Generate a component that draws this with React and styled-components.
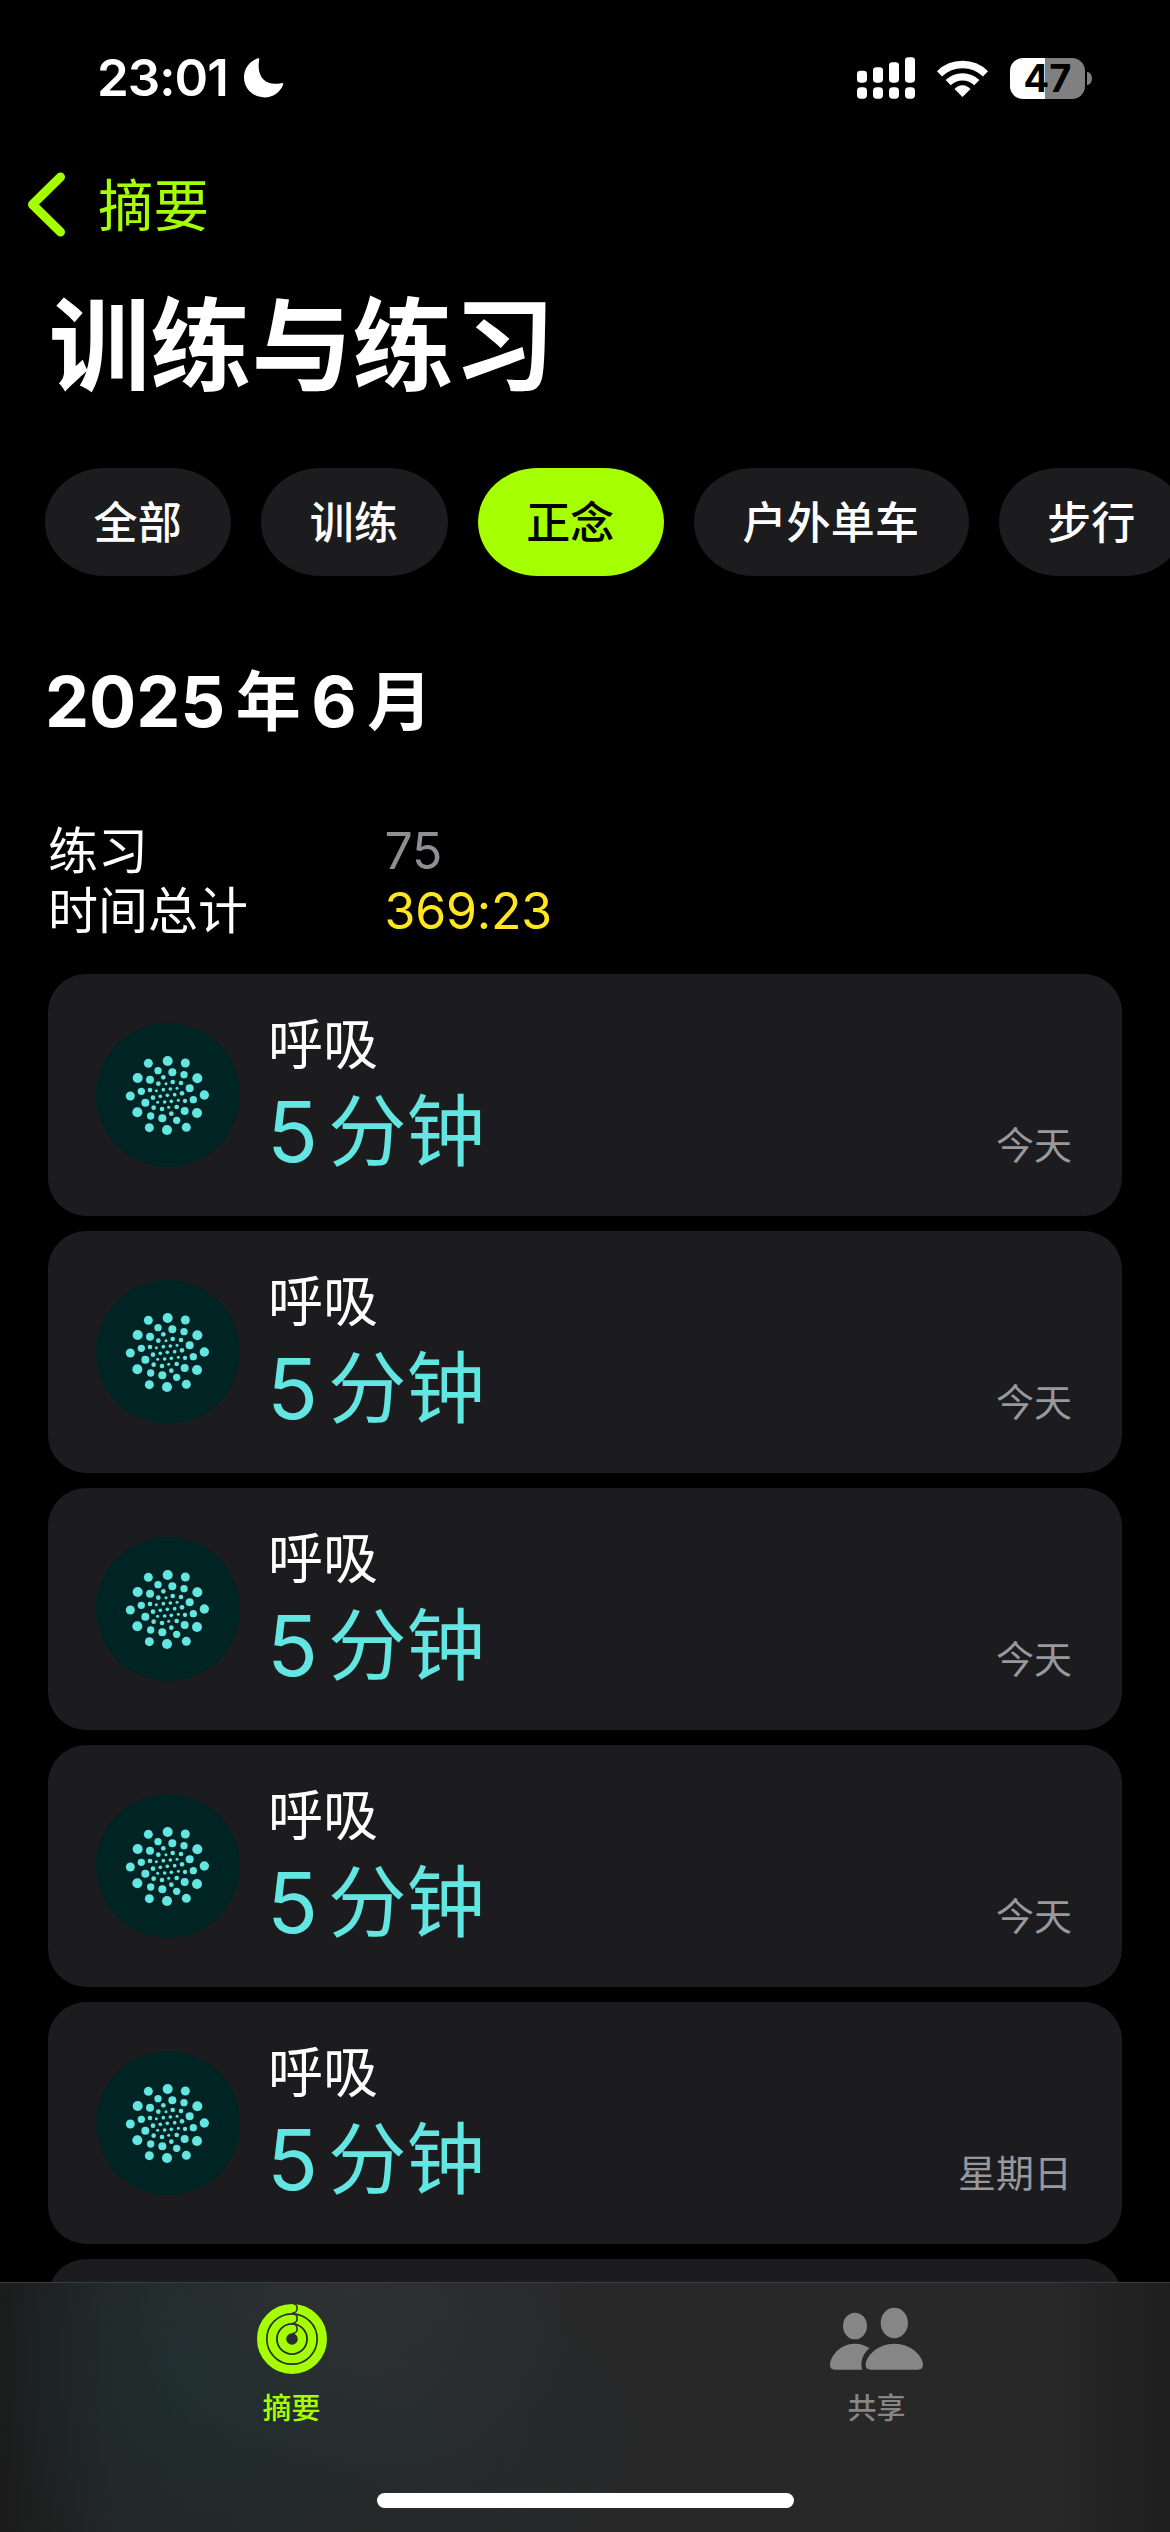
import React from "react";
import styled, { createGlobalStyle } from "styled-components";

const Global = createGlobalStyle`
  * { box-sizing: border-box; }
  html, body { margin: 0; background: #000; }
  body { overflow: hidden; }
`;

const Screen = styled.div`
  width: 1170px;
  height: 2532px;
  overflow: hidden;
  background: #000;
  color: #fff;
  font-family: Inter, "Noto Sans CJK SC", sans-serif;
  display: flex;
  flex-direction: column;
`;

const StatusBar = styled.header`
  height: 156px;
  flex: none;
  padding: 0 78px 0 97px;
  display: flex;
  align-items: center;
  justify-content: space-between;
`;

const Clock = styled.div`
  display: flex;
  align-items: center;
  gap: 16px;
`;

const Time = styled.span`
  width: 131px;
  font-size: 51px;
  line-height: 60px;
  font-weight: 600;
  letter-spacing: -1px;
  white-space: nowrap;
`;

const StatusIcons = styled.div`
  display: flex;
  align-items: center;
`;

const Signal = styled.svg`
  width: 58px;
  height: 42px;
  margin-right: 22px;
`;

const Wifi = styled.svg`
  width: 51px;
  height: 37px;
  margin-right: 22px;
`;

const BatteryBody = styled.div`
  width: 75px;
  height: 41px;
  border-radius: 13px;
  background: linear-gradient(90deg, #fff 35px, #808080 35px);
  color: #000;
  font-size: 38px;
  line-height: 41px;
  font-weight: 700;
  text-align: center;
`;

const BatteryTip = styled.div`
  width: 5px;
  height: 13px;
  margin-left: 2px;
  border-radius: 0 5px 5px 0 / 0 7px 7px 0;
  background: #808080;
`;

const NavBar = styled.nav`
  height: 96px;
  flex: none;
  padding-left: 26px;
  display: flex;
  align-items: center;
  color: #a6ff00;
`;

const Chevron = styled.svg`
  width: 42px;
  height: 66px;
  margin-right: 30px;
`;

const BackLabel = styled.span`
  font-size: 55.5px;
  line-height: 60px;
  padding-top: 3px;
`;

const Title = styled.h1`
  margin: 42px 0 0 49px;
  height: 104px;
  font-size: 101px;
  line-height: 104px;
  font-weight: 700;
  letter-spacing: 0.2px;
`;

const Chips = styled.div`
  margin: 70px 0 0 45px;
  height: 108px;
  flex: none;
  display: flex;
  gap: 30px;
`;

const Chip = styled.button`
  flex: none;
  height: 108px;
  padding: 2px 49.5px 0 48.5px;
  border: 0;
  border-radius: 60px / 54px;
  background: ${(p) => (p.$active ? "#a6ff00" : "#1c1c1e")};
  color: ${(p) => (p.$active ? "#000" : "#fff")};
  font: 500 44px/106px Inter, "Noto Sans CJK SC", sans-serif;
  letter-spacing: 0.15px;
`;

const Month = styled.h2`
  margin: 86px 0 0 45px;
  height: 80px;
  flex: none;
  font-size: 70px;
  line-height: 80px;
  font-weight: 700;
  display: flex;
  gap: 10.5px;
`;

const MonthUnit = styled.span`
  font-size: 65px;
`;

const Stats = styled.dl`
  margin: 79px 0 0 48px;
  flex: none;
  display: grid;
  grid-template-columns: 336.5px 1fr;
  grid-auto-rows: 60px;
  font-size: 50px;
  line-height: 60px;
`;

const StatLabel = styled.dt`
  margin: 0;
`;

const StatValue = styled.dd`
  margin: 0;
  color: ${(p) => p.$color};
  letter-spacing: -0.2px;
`;

const List = styled.main`
  margin: 33px 48px 0;
  flex: 1;
  min-height: 0;
  overflow: hidden;
  display: flex;
  flex-direction: column;
  gap: 15px;
`;

const Card = styled.article`
  height: 242px;
  flex: none;
  padding: 0 50px 0 48px;
  border-radius: 38px;
  background: #1c1c1e;
  display: flex;
  align-items: center;
`;

const Badge = styled.svg`
  width: 144px;
  height: 144px;
  flex: none;
  border-radius: 50%;
  background: #002323;
  fill: #63e6e2;
`;

const Details = styled.div`
  margin-left: 28px;
  flex: 1;
  display: flex;
  flex-direction: column;
`;

const Name = styled.span`
  font-size: 55px;
  line-height: 66px;
  margin-top: -2px;
`;

const Duration = styled.span`
  font-size: 78.5px;
  line-height: 90px;
  margin-top: 10px;
  color: #63e6e2;
  display: flex;
  gap: 12px;
`;

const Count = styled.span`
  font-size: 84px;
  width: 48px;
  margin-left: -1px;
  margin-right: 1px;
`;

const When = styled.span`
  align-self: flex-end;
  margin-bottom: 47px;
  font-size: 38px;
  line-height: 48px;
  color: #98989f;
`;

const TabBar = styled.footer`
  height: 250px;
  flex: none;
  border-top: 1px solid #3d3d40;
  background:
    radial-gradient(260px 190px at 350px 0, rgba(52, 54, 56, 0.6), transparent),
    radial-gradient(210px 230px at 185px 80px, rgba(27, 51, 52, 0.6), transparent),
    radial-gradient(260px 170px at 390px 150px, rgba(38, 50, 48, 0.55), transparent),
    linear-gradient(90deg, #1b1b1b 0, #232525 110px, #282829 600px, #282829 1050px, #1e1e1e 1170px);
  display: flex;
  flex-direction: column;
`;

const Tabs = styled.div`
  height: 210px;
  display: grid;
  grid-template-columns: 1fr 1fr;
`;

const Tab = styled.div`
  display: flex;
  flex-direction: column;
  align-items: center;
  padding: 21px 2px 0 0;
  color: ${(p) => (p.$active ? "#a6ff00" : "#868686")};
`;

const TabIcon = styled.svg`
  width: ${(p) => p.$w}px;
  height: 70px;
`;

const TabLabel = styled.span`
  margin-top: 15px;
  font-size: 29px;
  line-height: 40px;
  font-weight: 500;
`;

const HomeIndicator = styled.div`
  width: 417px;
  height: 15px;
  align-self: center;
  border-radius: 8px;
  background: #fff;
`;

const DOTS = [
  [115, 70, 13.5], [173, 63, 15], [226, 69, 13.5], [262, 115, 15], [283, 165, 14], [261, 219, 15],
  [229, 262, 13.5], [171, 270, 15], [118, 263, 13.5], [82, 217, 15], [61, 168, 13.5], [83, 114, 15],
  [144, 92, 11], [187, 97, 12], [222, 104, 11], [239, 145, 12], [250, 179, 11], [224, 213, 12],
  [200, 241, 11], [157, 235, 12], [122, 228, 11], [106, 188, 12], [94, 154, 11], [120, 119, 12],
  [160, 112, 7], [188, 126, 7], [213, 129, 7], [216, 160, 7], [225, 183, 6.5], [200, 201, 7],
  [184, 221, 7], [156, 207, 7], [131, 203, 7], [129, 173, 7], [120, 150, 7], [145, 131, 7],
  [168, 131, 4.5], [181, 147, 5.5], [201, 145, 4.5], [194, 164, 5.5], [205, 181, 4.5], [184, 184, 5.5],
  [176, 202, 4.5], [164, 186, 5.5], [143, 187, 4.5], [151, 169, 5.5], [139, 152, 4.5], [160, 149, 5.5],
  [172, 166, 5.5],
];

const BreatheIcon = () => (
  <Badge viewBox="-42 -51 432 432">
    {DOTS.map(([x, y, r]) => (
      <circle key={`${x}-${y}`} cx={x} cy={y} r={r} />
    ))}
  </Badge>
);

const Session = ({ when }) => (
  <Card>
    <BreatheIcon />
    <Details>
      <Name>呼吸</Name>
      <Duration>
        <Count>5</Count>
        <span>分钟</span>
      </Duration>
    </Details>
    <When>{when}</When>
  </Card>
);

const CHIPS = ["全部", "训练", "正念", "户外单车", "步行"];
const SESSIONS = ["今天", "今天", "今天", "今天", "星期日"];

export default function App() {
  return (
    <Screen>
      <Global />
      <StatusBar>
        <Clock>
          <Time>23:01</Time>
          <svg width="40" height="40" viewBox="0 0 40 40" fill="#fff">
            <path d="M13.2 .6C14.6 -.2 15.6 .4 15.2 2C13.6 11 15.5 17.5 19.5 21.5C23.8 25.8 30 26.6 37 25.2C38.8 24.8 39.6 25.6 39 27C36 34.4 29 39.4 20.5 39.4C9.2 39.4 0 30.6 0 19.5C0 10.8 5.4 3.6 13.2 .6Z" />
          </svg>
        </Clock>
        <StatusIcons>
          <Signal viewBox="108 50 174 124" fill="#fff">
            <rect x="108" y="90" width="30" height="36" rx="10" />
            <rect x="156" y="80" width="30" height="46" rx="10" />
            <rect x="204" y="65" width="30" height="61" rx="10" />
            <rect x="252" y="50" width="30" height="76" rx="10" />
            <rect x="108" y="140" width="30" height="34" rx="11" />
            <rect x="156" y="140" width="30" height="34" rx="11" />
            <rect x="204" y="140" width="30" height="34" rx="11" />
            <rect x="252" y="140" width="30" height="34" rx="11" />
          </Signal>
          <Wifi viewBox="347.5 57 153 111" fill="none" stroke="#fff" strokeWidth="22">
            <path d="M355 98.500A99 99 0 0 1 493 98.500" />
            <path d="M381 125A61.500 61.500 0 0 1 467 125" />
            <path d="M424 167L401 144Q411 133.500 424 133.500T447 144Z" fill="#fff" stroke="#fff" strokeWidth="2" />
          </Wifi>
          <BatteryBody>47</BatteryBody>
          <BatteryTip />
        </StatusIcons>
      </StatusBar>

      <NavBar>
        <Chevron viewBox="0 0 42 66" fill="none" stroke="currentColor" strokeWidth="9" strokeLinecap="round" strokeLinejoin="round">
          <path d="M34.500 6L6.500 33.500L34.500 61" />
        </Chevron>
        <BackLabel>摘要</BackLabel>
      </NavBar>

      <Title>训练与练习</Title>

      <Chips>
        {CHIPS.map((label) => (
          <Chip key={label} $active={label === "正念"}>{label}</Chip>
        ))}
      </Chips>

      <Month>
        <span>2025</span>
        <MonthUnit>年</MonthUnit>
        <span>6</span>
        <MonthUnit>月</MonthUnit>
      </Month>

      <Stats>
        <StatLabel>练习</StatLabel>
        <StatValue $color="#8e8e93">75</StatValue>
        <StatLabel>时间总计</StatLabel>
        <StatValue $color="#ffe620">369:23</StatValue>
      </Stats>

      <List>
        {SESSIONS.map((when, i) => (
          <Session key={i} when={when} />
        ))}
        <Card />
      </List>

      <TabBar>
        <Tabs>
          <Tab $active>
            <TabIcon $w={70} viewBox="48 72 210 210" fill="none" stroke="currentColor">
              <circle cx="153" cy="177" r="91.500" strokeWidth="27" />
              <circle cx="153" cy="177" r="60.500" strokeWidth="25" />
              <circle cx="153" cy="177" r="30" strokeWidth="25" />
              <g stroke="#2a3132" strokeWidth="5">
                <path d="M154 70A14.500 14.500 0 0 1 154 99" />
                <path d="M154 101A14.500 14.500 0 0 1 154 130" />
                <path d="M154 132A14.500 14.500 0 0 1 154 161" />
              </g>
            </TabIcon>
            <TabLabel>摘要</TabLabel>
          </Tab>
          <Tab>
            <TabIcon $w={93.3} viewBox="90 72 280 210" fill="currentColor">
              <ellipse cx="165" cy="138" rx="36" ry="40" />
              <ellipse cx="283" cy="129" rx="41" ry="46" />
              <path d="M213 269H353Q369 269 369 255C369 228 333 191 283 191C233 191 197 228 197 255Q197 269 213 269Z" />
              <path d="M104 269H187C179 247 190 218 209 205C197 196 182 191 165 191C119 191 90 230 90 256Q90 269 104 269Z" />
            </TabIcon>
            <TabLabel>共享</TabLabel>
          </Tab>
        </Tabs>
        <HomeIndicator />
      </TabBar>
    </Screen>
  );
}
